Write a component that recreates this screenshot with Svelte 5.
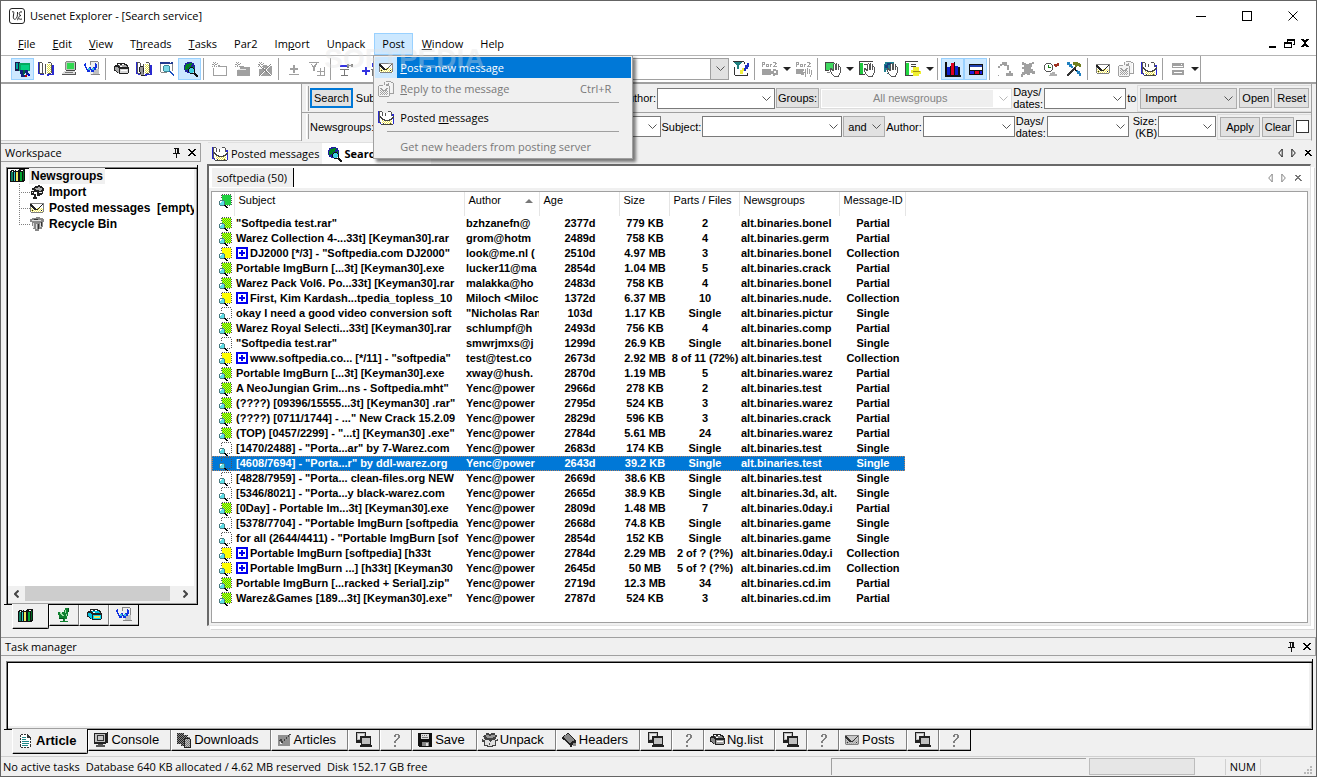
<script>
  const menus = ['&File', '&Edit', '&View', 'T&hreads', '&Tasks', 'Par2', 'Im&port', 'Unpack', 'Post', '&Window', 'Help'];

  const postMenu = [
    { label: '&Post a new message', icon: 'mail', active: true },
    { label: '&Reply to the message', icon: 'reply', key: 'Ctrl+R', disabled: true },
    null,
    { label: 'Posted &messages', icon: 'posted' },
    null,
    { label: 'Get new headers from posting server', disabled: true },
  ];

  // '|' is a separator, 'v' a small drop-down arrow, a leading '*' a pressed button
  const tools = ['*server', 'books', 'pc', 'wdoc', '|', 'box', 'boxbook', 'winfind', '*globe', '|', 'folder', 'folderfull', 'folderdel', '|',
    'plusminus', 'funnelplus', '|', 'treeminus', 'treeplus'];
  const tools2 = ['filterpage', '|', 'par2', 'v', 'par2hand', '|', 'handpc', 'v', 'handdoc', 'handglobe', 'handnote', 'v', '|', '*chart', '*panel', '|',
    'arm', 'bug', 'clock', 'hammer', '|', 'mail', 'reply', 'posted', '|', 'window', 'v'];

  const tree = [
    { icon: 'import', label: 'Import' },
    { icon: 'mail', label: 'Posted messages  [empty]' },
    { icon: 'bin', label: 'Recycle Bin' },
  ];

  const columns = ['', 'Subject', 'Author', 'Age', 'Size', 'Parts / Files', 'Newsgroups', 'Message-ID'];

  const rows = [
    ['"Softpedia test.rar"', 'bzhzanefn@', '2377d', '779 KB', '2', 'alt.binaries.bonel', 'Partial'],
    ['Warez Collection 4-...33t] [Keyman30].rar', 'grom@hotm', '2489d', '758 KB', '4', 'alt.binaries.germ', 'Partial'],
    ['DJ2000 [*/3] - "Softpedia.com DJ2000"', 'look@me.nl (', '2510d', '4.97 MB', '3', 'alt.binaries.bonel', 'Collection'],
    ['Portable ImgBurn [...3t] [Keyman30].exe', 'lucker11@ma', '2854d', '1.04 MB', '5', 'alt.binaries.crack', 'Partial'],
    ['Warez Pack Vol6. Po...33t] [Keyman30].rar', 'malakka@ho', '2483d', '758 KB', '4', 'alt.binaries.bonel', 'Partial'],
    ['First, Kim Kardash...tpedia_topless_10', 'Miloch <Miloc', '1372d', '6.37 MB', '10', 'alt.binaries.nude.', 'Collection'],
    ['okay I need a good video conversion soft', '"Nicholas Ran', '103d', '1.17 KB', 'Single', 'alt.binaries.pictur', 'Single'],
    ['Warez Royal Selecti...33t] [Keyman30].rar', 'schlumpf@h', '2493d', '756 KB', '4', 'alt.binaries.comp', 'Partial'],
    ['"Softpedia test.rar"', 'smwrjmxs@j', '1299d', '26.9 KB', 'Single', 'alt.binaries.bonel', 'Single'],
    ['www.softpedia.co... [*/11] - "softpedia"', 'test@test.co', '2673d', '2.92 MB', '8 of 11 (72%)', 'alt.binaries.test', 'Collection'],
    ['Portable ImgBurn [...3t] [Keyman30].exe', 'xway@hush.', '2870d', '1.19 MB', '5', 'alt.binaries.warez', 'Partial'],
    ['A NeoJungian Grim...ns - Softpedia.mht"', 'Yenc@power', '2966d', '278 KB', '2', 'alt.binaries.test', 'Partial'],
    ['(????) [09396/15555...3t] [Keyman30] .rar"', 'Yenc@power', '2795d', '524 KB', '3', 'alt.binaries.warez', 'Partial'],
    ['(????) [0711/1744] - ..." New Crack 15.2.09', 'Yenc@power', '2829d', '596 KB', '3', 'alt.binaries.crack', 'Partial'],
    ['(TOP) [0457/2299] - "...t] [Keyman30] .exe"', 'Yenc@power', '2784d', '5.61 MB', '24', 'alt.binaries.warez', 'Partial'],
    ['[1470/2488] - "Porta...ar" by 7-Warez.com', 'Yenc@power', '2683d', '174 KB', 'Single', 'alt.binaries.test', 'Single'],
    ['[4608/7694] - "Porta...r" by ddl-warez.org', 'Yenc@power', '2643d', '39.2 KB', 'Single', 'alt.binaries.test', 'Single'],
    ['[4828/7959] - "Porta... clean-files.org NEW', 'Yenc@power', '2669d', '38.6 KB', 'Single', 'alt.binaries.test', 'Single'],
    ['[5346/8021] - "Porta...y black-warez.com', 'Yenc@power', '2665d', '38.9 KB', 'Single', 'alt.binaries.3d, alt.', 'Single'],
    ['[0Day] - Portable Im...3t] [Keyman30].exe', 'Yenc@power', '2809d', '1.48 MB', '7', 'alt.binaries.0day.i', 'Partial'],
    ['[5378/7704] - "Portable ImgBurn [softpedia', 'Yenc@power', '2668d', '74.8 KB', 'Single', 'alt.binaries.game', 'Single'],
    ['for all (2644/4411) - "Portable ImgBurn [sof', 'Yenc@power', '2854d', '152 KB', 'Single', 'alt.binaries.game', 'Single'],
    ['Portable ImgBurn [softpedia] [h33t', 'Yenc@power', '2784d', '2.29 MB', '2 of ? (?%)', 'alt.binaries.0day.i', 'Collection'],
    ['Portable ImgBurn ...] [h33t] [Keyman30', 'Yenc@power', '2645d', '50 MB', '5 of ? (?%)', 'alt.binaries.cd.im', 'Collection'],
    ['Portable ImgBurn [...racked + Serial].zip"', 'Yenc@power', '2719d', '12.3 MB', '34', 'alt.binaries.cd.im', 'Partial'],
    ['Warez&Games [189...3t] [Keyman30].exe"', 'Yenc@power', '2787d', '524 KB', '3', 'alt.binaries.cd.im', 'Partial'],
  ];
  let selected = $state(16);

  const sideTabs = ['ngbooks', 'dish', 'boxblue', 'wdoc'];
  const taskTabs = [
    ['article', 'Article'], ['console', 'Console'], ['downloads', 'Downloads'], ['check', 'Articles'], ['screens'], ['help'],
    ['save', 'Save'], ['unpack', 'Unpack'], ['headers', 'Headers'], ['screens'], ['help'],
    ['boxgray', 'Ng.list'], ['screens'], ['help'], ['mailgray', 'Posts'], ['screens'], ['help'],
  ];

  // every second pixel of a rectangle, for dithered fills
  function dither(x, y, w, h) {
    let d = '';
    for (let j = 0; j < h; j++)
      for (let i = j % 2; i < w; i += 2) d += `M${x + i} ${y + j}h1v1h-1z`;
    return d;
  }

  const lens = [
    ['M2 7h4v1h1v4h-1v1h-4v-1h-1v-4h1z', '#5ae0e8'],
    ['M2 7h4v1h-4zM1 8h1v4h-1zM6 8h1v4h-1zM2 12h4v1h-4z', '#4a7a80'],
    ['M2 8h2v1h-1v1h-1z', '#fff'],
    ['M6 12h2v1h1v1h1v1h-2v-1h-1v-1h-1z', '#000'],
  ];
  const dots = ['M4 1h1v1h-1zM6 1h1v1h-1zM8 1h1v1h-1zM10 1h1v1h-1zM12 1h1v1h-1zM13 3h1v1h-1zM13 5h1v1h-1zM13 7h1v1h-1zM13 9h1v1h-1zM13 11h1v1h-1zM11 12h1v1h-1zM9 12h1v1h-1zM3 2h1v1h-1zM3 4h1v1h-1z', '#555'];
  const hand = [
    ['M5 8h2v1h1V4h1V3h1v1h1V2h1v1h1v1h1v1h1v1h1v6h-1v2h-1v2h-6v-1h-1v-1h-1v-2h-1v-1h-1z', '#fff'],
    ['M5 7h2v1h1v2h-1v-1h-2zM8 3h1v7h-1zM9 2h1v1h-1zM10 3h1v6h-1zM11 2h1v7h-1zM13 3h1v6h-1zM14 5h1v1h-1zM15 6h1v6h-1zM14 12h1v2h-1zM5 9h1v2h-1zM6 11h1v2h-1zM7 13h1v1h-1zM8 14h1v2h-1zM8 15h6v1h-6zM13 14h1v1h-1z', '#555'],
  ];
  const bookBase = [
    ['M2 2h3v1h2v9h-1v-1h-4zM8 3h2v-1h4v10h-3v1h-3z', '#fff'],
    ['M0 1h1v11h1v1h-2zM14 4h2v10h-5v1h-2v-1h-7v-1h4v1h3v-1h5z', '#2a2ad0'],
    ['M1 1h1v11h-1zM2 1h2v1h-2zM4 2h1v10h-1zM7 3h1v10h-1zM13 2h1v10h-1zM10 1h3v1h-3zM10 12h3v1h-3zM2 12h4v1h-4z', '#555'],
    [dither(9, 3, 4, 9), '#e0e040'],
  ];
  const envelope = (paper, speck, line) => [
    ['M1 4h14v9h-14z', paper],
    [dither(2, 8, 12, 4), speck],
    ['M1 3h14v1h-14zM1 4h1v9h-1zM14 4h1v9h-1zM1 12h14v1h-14z', '#808080'],
    ['M2 4h1v1h1v1h1v1h1v1h1v1h2v-1h1v-1h1v-1h1v-1h1v-1h1v1h-1v1h-1v1h-1v1h-1v1h-1v1h-4v-1h-1v-1h-1v-1h-1v-1h-1v-1h-1z', line],
    ['M3 10h1v1h-1zM12 10h1v1h-1z', line],
  ];
  const boxOf = (top, side) => [
    ['M4 2h8v1h2v1h1v2h1v6h-1v1h-9v-1h-2v-1h-1v-1h-2v-5h1v-1h2z', '#222'],
    ['M5 4h7l2 2h-7zM2 6h2l2 2v4l-4-3z', top],
    ['M7 8h8v4h-8z', side],
    ['M8 9h6v1h-6z', '#fff'],
    ['M5 3h2v1h-2zM9 3h2v1h-2zM7 5h2v1h-2z', '#fff'],
  ];
  const star = ['M2 1h1v1h-1zM4 1h1v1h-1zM1 3h5v1h-5zM3 2h1v4h-1zM1 5h1v1h-1zM5 5h1v1h-1zM6 2h1v1h-1z', '#999'];
  const par2 = ['M0 1h3v3h-2v2h-1zM1 2h1v1h-1zM4 3h3v3h-3zM5 4h1v1h-1zM8 3h2v1h-1v2h-1zM11 1h3v1h1v1h-1v1h-1v1h2v1h-4v-1h1v-1h1v-2h-2z', '#a0a0a0'];

  const icons = {
    logo: [['M3 .5h10q2.500 0 2.500 2.500v10q0 2.500 -2.500 2.500h-10q-2.500 0 -2.500 -2.500v-10q0-2.500 2.500-2.500z', '#fff', '#222'],
      ['M3 4c2-1 2 0 1.500 3s0 5 2 4s2-4 2-7M8 12c1 0 1-1 1-2M13 4c-3-1-4 3-1 3.500c-3 0-3.500 5 1 3.500', 'none', '#222']],
    server: [['M0 1h5v3h2v6h-7z', '#1a1a50'], ['M4 2h11v8h-11z', '#00a860'], ['M6 4h8v5h-8z', '#00d080'], ['M1 2h2v6h-2z', '#00a0a0'],
      ['M5 9h3v5h2v2h-4v-3h-1zM10 9h3v3h1v2h-3v-2h-1z', '#102080'], ['M8 9h2v4h-1v1h-1z', '#006040'], ['M10 14h2v2h-2z', '#c00000'], ['M13 13h2v2h-2z', '#0000d0']],
    books: bookBase,
    pc: [['M5 1h9v8h-9z', '#b8c8b8'], ['M6 2h7v6h-7z', '#30d850'], ['M4 1h1v8h-1zM5 0h9v1h-9z', '#888'], ['M14 1h1v9h-1zM5 9h10v1h-10z', '#444'], ['M3 10h11v3h-13v-1h1v-1h1z', '#ddd'], ['M14 11h1v3h-14v-1h13z', '#555'], ['M4 11h8v1h-8z', '#777']],
    wdoc: [['M6 1h8v13h-8z', '#eee'], ['M6 0h8v1h-8zM14 1h1v8h-1zM6 1h1v3h-1zM7 13h9v1h-9z', '#888'], ['M9 8h6v5h-6z', '#c0c0c0'],
      ['M0 3h2v3h1v2h2v-2h2v2h2v-2h2v-3h2v4h-1v2h-2v2h-3v-2h-1v2h-3v-2h-1v-2h-1v-2h-1z', '#1030e0'], ['M4 7h2v2h-2zM8 7h2v2h-2z', '#40c0e0'], ['M1 2h1v1h-1zM11 2h1v1h-1z', '#1030e0']],
    box: boxOf('#a8a8a8', '#d8d8d8'),
    boxblue: [...boxOf('#00c0e0', '#00d8f0'), ['M8 9h6v2h-6z', '#e8e060']],
    boxgray: boxOf('#888', '#a8a8a8'),
    boxbook: [...bookBase, ['M4 6h3v1h1v4h-1v2h1v1h-4v-3h-1v-4h1z', '#999'], ['M4 5h3v1h-3zM3 6h1v5h-1zM7 7h1v4h-1zM4 11h1v4h4v-1h-4z', '#222']],
    winfind: [['M1 1h13v10h-13z', '#fff'], ['M1 1h13v2h-13z', '#223a90'], ['M1 3h1v9h-1zM13 3h1v7h-1zM1 11h7v1h-7z', '#888'], ['M11 1h1v1h-1z', '#fff'], ['M5 5h5v5h-5z', '#7ad8e8'], ['M5 4h5v1h-5zM4 5h1v5h-1zM10 5h1v5h-1zM5 10h5v1h-5z', '#3a8a98'], ['M10 10h2v1h1v1h1v1h1v2h-1v-1h-1v-1h-1v-1h-1v-1h-1z', '#1a50c0']],
    globe: [['M5 1h5v1h2v2h1v5h-1v2h-2v1h-5v-1h-2v-2h-1v-5h1v-2h2z', '#2020a0'], ['M4 3h3v-1h3v2h-1v2h-2v2h-2v1h-2v-4h1zM8 7h3v-2h1v4h-2v1h-2z', '#008020'], ['M8 7h3v1h1v3h-1v1h-3v-1h-1v-3h1z', '#40d0e0'], ['M8 6h3v1h-3zM7 7h1v1h-1zM6 8h1v3h-1zM11 7h1v1h-1zM12 8h1v3h-1zM8 12h3v1h-3zM12 11h1v1h1v1h1v1h1v2h-2v-1h-1v-1h-1v-1h-1v-1h1z', '#111']],
    folder: [star, ['M7 4h2v1h7v10h-14v-8h1v7h12v-8h-8z', '#a0a0a0']],
    folderfull: [star, ['M6 5h4v1h6v9h-13v-6h3z', '#a0a0a0'], ['M4 8h8v1h-8z', '#e8e8e8']],
    folderdel: [star, ['M6 4h4v1h5v10h-13v-7h4z', '#a0a0a0'], ['M3 4l12 11M15 3l-12 12', 'none', '#fff'], ['M2 4l12 11M14 3l-12 12', 'none', '#888']],
    plusminus: [['M7 4h2v3h3v2h-3v3h-2v-3h-3v-2h3zM3 13h10v1h-10z', '#a0a0a0']],
    funnelplus: [['M0 1h10v1h-2v2h-1v2h-1v4h-2v-4h-1v-2h-1v-2h-2z', '#a0a0a0'], ['M2 2h5v1h-1v1h-1v1h-1v-1h-1v-1h-1z', '#fff'], ['M11 7h1v3h3v1h-3v3h-1v-3h-3v-1h3zM8 15h8v-9h-1v8h-7z', '#a0a0a0']],
    treeminus: [['M2 4h7v2h-7z', '#3333e0'], ['M9 3h2v1h2v-1h2v3h-2v-1h-2v2h-2zM2 8h9v1h-4v5h3v1h-7v-1h3v-5h-4z', '#777']],
    treeplus: [['M4 6h2v3h3v2h-3v3h-2v-3h-3v-2h3zM11 2h2v3h2v1h-4z', '#3333e0'], ['M10 8h5v1h-2v6h-2v-6h-1z', '#777']],
    filterpage: [['M1 1h10l3 3v11h-13z', '#fff'], ['M0 0h11v1h-11zM1 6h1v9h-1zM1 15h14v-3h-1v2h-13zM11 1h1v2h-1z', '#333'], ['M1 1h8v1h-1v1h-1v1h-1v4h-2v-4h-1v-1h-1v-1h-1z', '#208080'], ['M7 9h2v-2h2v3h-1v3h-3z', '#f0f040'], ['M12 4h2v-2h2v4h-1v2h-2v2h-2v-3h1z', '#2030c0']],
    par2: [par2, ['M0 8h9v6h-9zM9 10h2v-2h3v1h2v2h-2v-1h-2v2h2v-1h2v3h-3v1h-2v-2h-2z', '#a0a0a0']],
    par2hand: [par2, ['M0 8h8v2h-1v2h1v2h-3v-1h-5zM9 8h1v5h-1zM11 7h1v6h-1zM13 8h1v5h-1zM15 9h1v5h-1zM7 11h2v1h-2zM9 13h1v3h-1zM14 14h1v2h-1z', '#a0a0a0']],
    handpc: [['M0 1h9v9h-9z', '#444'], ['M1 2h8v7h-8z', '#40d860'], ['M2 11h6v1h-6z', '#888'], ...hand],
    handdoc: [['M1 1h13v12h-13z', '#fff'], ['M0 0h14v1h-14zM0 1h1v13h-1zM1 13h7v1h-7zM5 3h7v1h-7z', '#444'], ['M1 2h3v11h-3z', '#20c840'], ...hand],
    handglobe: [['M3 1h9v2h2v8h-2v2h-7v-2h-3v-8h1z', '#208090'], ['M5 2h4v2h-3v3h-3v-3h2z', '#184080'], ...hand],
    handnote: [['M1 1h12v12h-12z', '#fff'], ['M0 0h13v1h-13zM0 1h1v14h-1zM1 14h7v1h-7zM6 3h5v1h-5zM6 5h5v1h-5z', '#444'], ['M1 2h3v12h-3z', '#20d840'], ['M8 6h6v4h2v3h-2v2h-6v-3h-2v-3h2z', '#f0f030'], ['M8 10h7v1h-7z', '#a09010']],
    chart: [['M0 1h2v13h14v2h-16z', '#111'], ['M2 6h4v8h-4z', '#1020d0'], ['M6 2h4v12h-4z', '#e00020'], ['M10 5h3v9h-3z', '#1020d0'], ['M5 5h1v9h-1zM9 1h1v13h-1zM13 6h2v8h-2z', '#111']],
    panel: [['M1 3h14v11h-14z', '#111'], ['M2 6h12v3h-12z', '#fff'], ['M2 4h12v2h-12z', '#2040b0'], ['M2 10h4v3h-4zM12 10h2v3h-2z', '#2020e0'], ['M7 10h4v3h-4z', '#e00020']],
    arm: [['M3 3h2v-2h5v3h2v5h-2v-4h-3v-1h-2v1h-2v2h-2v-2h2zM9 12h3v-2h2v2h2v3h-7zM1 14h1v1h-1z', '#a0a0a0']],
    bug: [['M2 1h2v1h2v1h3v-1h3v-1h2v2h-2v3h-1v2h2v2h2v3h-3v-1h-2v2h-3v-1h-2v1h-2v2h-2v-3h1v-2h2v-3h-2v-2h2v-2h-2z', '#a0a0a0']],
    clock: [['M3 3h5v1h1v5h-1v1h-5v-1h-1v-5h1z', '#fff'], ['M3 2h5v1h-5zM1 4h1v5h-1zM2 3h1v1h-1zM8 3h1v1h-1zM9 4h1v5h-1zM3 10h5v1h-5zM2 9h1v1h-1zM8 9h1v1h-1z', '#555'], ['M5 4h1v2h2v1h-3z', '#108010'], ['M11 3h3v-1h2v3h-2v1h-2v-1h-1z', '#a03020'], ['M7 12h2v-1h3v2h2v2h-8v-1h1z', '#b0b0b0']],
    hammer: [['M1 1h3v2h2v2h1v2h-2v-1h-2v-2h-2zM10 9h2v1h2v2h1v3h-2v-2h-2v-2h-1z', '#2080c0'], ['M7 1h5v1h2v1h1v3h-2v-1h-2v1h-2v-2h-2z', '#708020'], ['M8 6h2v2h-1v1h-1v1h-1v1h-1v1h-1v1h-1v1h-1v1h-2v-2h1v-1h1v-1h1v-1h1v-1h1v-1h1v-1h1z', '#333'], ['M9 8h1v1h1v1h-2z', '#111']],
    mail: envelope('#fff', '#f0e860', '#222'),
    mailgray: envelope('#c8c8c8', '#a8a8a8', '#333'),
    reply: [['M6 1h7v1h1v10h-3v3h-10v-11h5z', '#f4f4f4'], ['M6 1h1v3h-1zM8 0h5v1h-5zM13 1h1v1h-1zM15 2h1v11h-4v-1h3v-10h-1v-1h1zM1 4h4v1h-4zM0 5h1v10h-1zM1 15h10v1h-10zM11 5h1v10h-1zM8 3h2v-1h1v3h-3z', '#a0a0a0'], [dither(2, 9, 8, 5), '#a0a0a0'], ['M2 7h2v1h1v1h2v-1h1v-1h2v1h-1v1h-1v1h-4v-1h-1v-1h-1z', '#a0a0a0']],
    posted: [...bookBase.slice(0, 3), ['M3 6h12v9h-12z', '#fff'], [dither(4, 10, 10, 5), '#e8e050'], ['M2 6h1v1h1v1h1v1h2v1h4v-1h2v-1h1v-1h1v-1h1v2h-1v1h-1v1h-2v1h-6v-1h-2v-1h-1v-1h-1zM3 14h2v-1h1v1h6v-1h1v1h2v1h-12z', '#444']],
    window: [['M2 2h12v5h-12zM2 9h12v5h-12z', '#a0a0a0'], ['M3 5h10v1h-10zM4 11h8v1h-8z', '#fff'], ['M11 3h1v1h-1z', '#fff']],
    ngbooks: [['M1 3h1v-1h3v1h1v-1h4v-1h6v12h-1v1h-14z', '#111'], ['M2 4h2v9h-2z', '#108060'], ['M5 4h1v9h-1z', '#30d0d0'], ['M7 4h2v9h-2z', '#f0e860'], ['M11 4h2v9h-2z', '#00a830'], ['M14 3h1v9h-1z', '#006820'], ['M3 3h1v1h-1zM7 2h2v1h-2zM12 2h2v1h-2z', '#fff']],
    import: [['M5 3h1v-1h3v-1h2v1h2v1h1v1h1v3h-1v3h-1v1h-2v1h-3v-4h-3v2h2v3h1v2h-4v-2h1v-2h-3v-4h1v-3h2z', '#222'], ['M6 4h3v-1h2v1h2v2h-1v1h-2v-1h-3z', '#aaa'], ['M10 8h3v1h-3zM3 6h2v1h-2zM3 8h1v1h-1z', '#eee']],
    bin: [['M1 3h2v-1h4v-1h4v1h3v1h1v3h-1v5h-1v2h-3v2h-4v-2h-2v-3h-1v-4h-2z', '#888'], ['M3 4h9v1h-9zM4 7h1v5h-1zM7 8h1v5h-1zM11 7h1v4h-1z', '#ddd'], ['M9 8h1v5h-1zM5 3h4v1h-4zM12 6h1v4h-1z', '#333']],
    dish: [['M9 1h4v3h-1v5h-1v3h-2v2h3v1h-8v-1h3v-3h-4v-3h-1v-3h2v2h2v-2h2v-2h1z', '#108030'], ['M4 5h1v1h1v1h1v1h1v1h-2v-1h-1v-1h-1zM9 3h1v3h-1zM10 7h1v2h-1z', '#9fe0a8'], ['M12 1h1v4h-1zM3 11h5v1h-5z', '#005018']],
    article: [['M3 1h7v1h1v1h1v1h1v10h-10z', '#fff'], ['M3 1h2v1h-2zM6 1h2v1h-2zM9 1h1v1h1v1h1v1h1v3h-1v-2h-3zM12 8h1v2h-1zM12 11h1v3h-1zM2 2h1v2h-1zM2 5h1v2h-1zM2 8h1v2h-1zM2 11h1v3h-1zM3 14h2v1h-2zM6 14h2v1h-2zM9 14h2v1h-2z', '#333'], ['M4 4h4v1h-4zM4 6h4v1h-4zM4 8h7v1h-7zM4 10h7v1h-7zM4 12h6v1h-6z', '#208888']],
    console: [['M1 1h13v-1h1v11h-2v1h-12z', '#222'], ['M2 2h10v8h-10z', '#c0c0c0'], ['M4 3h7v6h-7z', '#333'], ['M5 4h5v4h-5z', '#c8c8c8'], ['M5 12h5v1h2v2h-9v-2h2z', '#555']],
    downloads: [['M1 1h7v2h3v2h3v2h1v9h-7v-2h-3v-2h-4z', '#888'], [dither(1, 1, 7, 11), '#222'], [dither(5, 3, 7, 11), '#222'], ['M8 6h6v1h1v9h-7z', '#222'], ['M9 7h5v8h-5z', '#c0c0c0'], [dither(9, 7, 5, 8), '#777']],
    check: [['M2 3h12v11h-12z', '#909090'], ['M4 7h2v2h2v-2h2v-2h2v-2h3v-1h-2v3h-2v2h-2v2h-2v2h-2v-2h-2z', '#444'], ['M4 10h1v1h1v1h-2z', '#eee']],
    screens: [['M0 0h10v9h-10z', '#222'], ['M1 1h8v7h-8z', '#b8b8b8'], ['M2 2h6v5h-6z', '#eee'], ['M0 9h5v2h-5zM4 4h11v9h1v2h-12v-2h1z', '#222'], ['M6 6h8v6h-8z', '#c0c0c0']],
    help: [['M6 3h1v-1h4v1h1v3h-1v1h-1v1h-1v1h-1v2h-2v-2h1v-1h1v-1h1v-1h1v-3h-2v2h-2zM6 13h2v2h-2z', '#808080']],
    save: [['M1 1h14v14h-13v-1h-1z', '#111'], ['M4 2h8v5h-8z', '#ddd'], ['M5 3h1v1h-1zM7 3h1v1h-1zM9 3h1v1h-1zM5 5h6v1h-6z', '#777'], ['M5 10h7v4h-7z', '#888'], ['M9 11h2v3h-2z', '#ddd']],
    unpack: [['M2 3h2v-2h3v1h2v-1h4v2h2v2h-1v2h2v2h-2v5h-3v1h-6v-1h-3v-4h-2v-3h2v-2h-1z', '#444'], ['M4 3h3v1h2v-1h4v2h-2v1h-6v-1h-1z', '#999'], ['M3 8h3l2 2 2-2h3v5h-3v1h-4v-1h-3zM1 7h2v1h-2zM13 7h2v1h-2z', '#e0e0e0'], ['M7 11h1v2h-1z', '#555']],
    headers: [['M1 5l6-4 8 7v4l-5 3-9-8z', '#222'], ['M2 5l5-3 7 6-5 3z', '#888'], ['M3 8l6 5v1l-6-5zM11 13l3-2v1l-3 2z', '#ddd'], ['M12 11h3v3h-3z', '#888']],
    art_Single: [['M4 2h9v10h-9z', '#fff'], dots, ...lens],
    art_Collection: [['M4 2h9v10h-9z', '#ff0'], dots, ...lens],
    art_Partial: [['M4 2h9v10h-9z', '#e8f000'], [dither(4, 2, 9, 10), '#20e010'], dots, ...lens],
    art_head: [['M4 2h9v10h-9z', '#20d040'], dots, ...lens],
    art_sel: [dots, ...lens],
    pin: [['M6 3h5v1h-5zM7 4h1v4h-1zM9 4h2v4h-2zM5 8h7v1h-7zM8 9h1v4h-1z', '#111']],
    cross: [['M4 4h2v1h1v1h2v-1h1v-1h2v1h-1v1h-1v1h-1v1h1v1h1v1h1v1h-2v-1h-1v-1h-2v1h-1v1h-2v-1h1v-1h1v-1h1v-1h-1v-1h-1v-1h-1z', 'currentColor']],
    prev: [['M10.500 3.500v9l-4-4.500z', 'none', 'currentColor']],
    next: [['M5.500 3.500v9l4-4.500z', 'none', 'currentColor']],
    mdimin: [['M4 11h7v2h-7z', '#000']],
    mdirestore: [['M6 4h8v6h-2v-1h1v-3h-6v1h-1zM3 7h8v6h-8zM4 9v3h6v-3z', '#000']],
    mdiclose: [['M4 4h3v1h2v-1h3v1h-1v1h-1v1h-1v2h1v1h1v1h1v1h-3v-1h-2v1h-3v-1h1v-1h1v-1h1v-2h-1v-1h-1v-1h-1z', '#000']],
    min: [['M3 8h10v1h-10z', '#000']],
    max: [['M3 3h10v10h-10zM4 4v8h8v-8z', '#000']],
    close: [['M3.500 3.500l9 9M12.500 3.500l-9 9', 'none', '#000']],
  };
</script>

{#snippet icon(name)}
  <svg class="icon" class:smooth={['logo', 'close', 'prev', 'next'].includes(name)} viewBox="0 0 16 16" aria-hidden="true">
    {#each icons[name] as [d, fill, stroke]}
      <path {d} {fill} stroke={stroke ?? 'none'} fill-rule="evenodd" />
    {/each}
  </svg>
{/snippet}

{#snippet accel(text)}
  {@const i = text.indexOf('&')}
  {#if i < 0}{text}{:else}{text.slice(0, i)}<u>{text[i + 1]}</u>{text.slice(i + 2)}{/if}
{/snippet}

{#snippet combo(cls, label, value = '', disabled = false)}
  <span class="combo {cls}">
    <select aria-label={label} {disabled}><option>{value}</option></select>
    <svg viewBox="0 0 9 5" aria-hidden="true"><path d="M.5 .5l4 4 4-4" fill="none" stroke="currentColor" /></svg>
  </span>
{/snippet}

{#snippet toolbar(list)}
  {#each list as t}
    {#if t == '|'}
      <i class="sep"></i>
    {:else if t == 'v'}
      <button class="drop" aria-label="More"><i></i></button>
    {:else}
      <button class="tool" class:on={t[0] == '*'} aria-label={t.replace('*', '')}>{@render icon(t.replace('*', ''))}</button>
    {/if}
  {/each}
{/snippet}

<div class="window">
  <header class="title">
    {@render icon('logo')}
    <h1>Usenet Explorer - [Search service]</h1>
    <button aria-label="Minimize">{@render icon('min')}</button>
    <button aria-label="Maximize">{@render icon('max')}</button>
    <button aria-label="Close">{@render icon('close')}</button>
  </header>

  <nav class="menubar">
    {#each menus as m}
      <div class="menu" class:open={m == 'Post'}>
        <button>{@render accel(m)}</button>
        {#if m == 'Post'}
          <div class="popup">
            {#each postMenu as item}
              {#if item}
                <button class:active={item.active} disabled={item.disabled}>
                  <span class="pic">{#if item.icon}{@render icon(item.icon)}{/if}</span>
                  <span class="text">{@render accel(item.label)}</span>
                  {#if item.key}<span class="key">{item.key}</span>{/if}
                </button>
              {:else}
                <hr />
              {/if}
            {/each}
          </div>
          <span class="mark">SOFTPEDIA</span>
        {/if}
      </div>
    {/each}
    <div class="mdi">
      <button aria-label="Minimize child">{@render icon('mdimin')}</button>
      <button aria-label="Restore child">{@render icon('mdirestore')}</button>
      <button aria-label="Close child">{@render icon('mdiclose')}</button>
    </div>
  </nav>

  <div class="toolbar">
    <div class="tools">
      {@render toolbar(tools)}
      {@render combo('wide boxed', 'Filter')}
      {@render toolbar(tools2)}
    </div>
  </div>

  <div class="search">
    <div class="blank"></div>
    <div class="bars">
      <div class="bar">
        <i class="grip"></i>
        <button class="push default">Search</button>
        <span>Subject:</span>
        {@render combo('grow', 'Subject')}
        <span>Author:</span>
        {@render combo('w118', 'Author')}
        <button class="push tight">Groups:</button>
        {@render combo('w192 all', 'Groups', 'All newsgroups', true)}
        <span class="two">Days/<br />dates:</span>
        {@render combo('w82', 'Days')}
        <span>to</span>
        <div class="set">
          {@render combo('w97 gray', 'Target', 'Import')}
          <button class="push">Open</button>
          <button class="push">Reset</button>
        </div>
      </div>
      <div class="bar">
        <i class="grip"></i>
        <span>Newsgroups:</span>
        {@render combo('grow', 'Newsgroups')}
        <span>Subject:</span>
        {@render combo('w140', 'Subject filter')}
        {@render combo('w42 gray', 'Operator', 'and')}
        <span>Author:</span>
        {@render combo('w92', 'Author filter')}
        <span class="two">Days/<br />dates:</span>
        {@render combo('w82', 'Days filter')}
        <span class="two right">Size:<br />(KB)</span>
        {@render combo('w58', 'Size')}
        <div class="set">
          <button class="push roomy">Apply</button>
          <button class="push">Clear</button>
          <input type="checkbox" aria-label="Use filter" />
        </div>
      </div>
    </div>
  </div>

  <div class="middle">
    <aside>
      <div class="caption">
        <h2>Workspace</h2>
        <button aria-label="Pin">{@render icon('pin')}</button>
        <button aria-label="Close">{@render icon('cross')}</button>
      </div>
      <div class="well">
        <ul class="tree">
          <li class="root">{@render icon('ngbooks')}<span>Newsgroups</span></li>
          {#each tree as node}
            <li>{@render icon(node.icon)}<span>{node.label}</span></li>
          {/each}
        </ul>
        <div class="hscroll">
          <button aria-label="Scroll left"><svg viewBox="0 0 5 8"><path d="M4.500 .5l-3.500 3.500 3.500 3.500" /></svg></button>
          <i></i>
          <button aria-label="Scroll right"><svg viewBox="0 0 5 8"><path d="M.5 .5l3.500 3.500-3.500 3.500" /></svg></button>
        </div>
      </div>
      <div class="tabs">
        {#each sideTabs as t, i}
          <button class:current={i == 0} aria-label={t}>{@render icon(t)}</button>
        {/each}
      </div>
    </aside>

    <main>
      <div class="doctabs">
        <button>{@render icon('posted')}Posted messages</button>
        <button class="current">{@render icon('globe')}Search service</button>
        <span class="arrows">{@render icon('prev')}{@render icon('next')}{@render icon('cross')}</span>
      </div>
      <div class="frame">
        <div class="subtabs">
          <button>softpedia (50)</button>
          <span class="arrows">{@render icon('prev')}{@render icon('next')}{@render icon('cross')}</span>
        </div>
        <div class="list">
          <table>
            <thead>
              <tr>
                {#each columns as c, i}
                  <th class="c{i}">{#if i == 0}{@render icon('art_head')}{:else}{c}{/if}{#if c == 'Author'}<i class="asc"></i>{/if}</th>
                {/each}
              </tr>
            </thead>
            <tbody>
              {#each rows as row, r}
                <tr class:selected={r == selected} onclick={() => (selected = r)}>
                  <td>{@render icon(r == selected ? 'art_sel' : 'art_' + row[6])}</td>
                  {#each row as cell, i}
                    <td class:mid={i > 1 && i != 5}>{#if i == 0 && row[6] == 'Collection'}<svg class="expand" viewBox="0 0 12 12" aria-hidden="true"><path d="M1 1h10v10h-10z" fill="#fff" stroke="#00e" stroke-width="2" /><path d="M3 6h6M6 3v6" stroke="#00e" stroke-width="2" /></svg>{/if}{cell}</td>
                  {/each}
                </tr>
              {/each}
            </tbody>
          </table>
        </div>
      </div>
    </main>
  </div>

  <section class="tasks">
    <div class="caption">
      <h2>Task manager</h2>
      <button aria-label="Pin">{@render icon('pin')}</button>
      <button aria-label="Close">{@render icon('cross')}</button>
    </div>
    <div class="well"></div>
    <div class="tabs">
      {#each taskTabs as [pic, label], i}
        <button class:current={i == 0} class:labelled={label} aria-label={label ?? pic}>{@render icon(pic)}{label ?? ''}</button>
      {/each}
    </div>
  </section>

  <footer>
    <span>No active tasks</span>
    <span>Database 640 KB allocated / 4.62 MB reserved</span>
    <span>Disk 152.17 GB free</span>
    <i class="pane"></i>
    <i class="progress"></i>
    <span class="num">NUM</span>
    <svg class="size" viewBox="0 0 8 8" aria-hidden="true"><path d="M6 0h2v2h-2zM3 3h2v2h-2zM6 3h2v2h-2zM0 6h2v2h-2zM3 6h2v2h-2zM6 6h2v2h-2z" fill="#b8b8b8" /></svg>
  </footer>
</div>

<style>
  :global(body) {
    background: #f0f0f0;
  }

  * {
    box-sizing: border-box;
  }

  .window {
    display: flex;
    flex-direction: column;
    height: 100vh;
    border: 1px solid #646464;
    background: #f0f0f0;
    color: #000;
    font: 11px/16px "Open Sans", "Noto Sans", sans-serif;
    overflow: hidden;
  }

  button {
    margin: 0;
    padding: 0;
    border: 0;
    background: none;
    font: inherit;
    color: inherit;
    white-space: nowrap;
  }

  h1, h2 {
    margin: 0;
    flex: 1;
    font: inherit;
  }

  .icon {
    display: block;
    flex: none;
    width: 16px;
    height: 16px;
    shape-rendering: crispEdges;
  }

  .icon.smooth {
    shape-rendering: auto;
  }

  .title {
    display: flex;
    align-items: center;
    gap: 5px;
    height: 30px;
    padding: 0 3px 0 8px;
    background: #fff;
  }

  .title button {
    display: flex;
    justify-content: center;
    width: 41px;
  }

  .menubar {
    display: flex;
    align-items: flex-end;
    gap: 1px;
    height: 24px;
    padding-left: 9px;
    background: #fff;
  }

  .menu {
    position: relative;
  }

  .menu > button {
    height: 22px;
    padding: 0 7px;
    border: 1px solid transparent;
  }

  .menu.open > button {
    background: #cce8ff;
    border-color: #99d1ff;
  }

  .mark {
    position: absolute;
    z-index: 3;
    left: -50px;
    top: 12px;
    color: rgba(225, 225, 225, 0.35);
    font: bold 28px/28px "Liberation Sans", sans-serif;
    pointer-events: none;
  }

  .popup {
    position: absolute;
    z-index: 2;
    left: -1px;
    top: 22px;
    width: 260px;
    padding: 1px;
    border: 1px solid #a0a0a0;
    background: #f0f0f0;
    box-shadow: 3px 3px 3px rgba(0, 0, 0, 0.5);
  }

  .popup button {
    display: flex;
    align-items: center;
    width: 100%;
    height: 21px;
    text-align: left;
  }

  .popup button:disabled {
    color: #787878;
  }

  .popup .pic {
    display: flex;
    justify-content: center;
    align-items: center;
    width: 22px;
    height: 21px;
  }

  .popup .text {
    flex: 1;
    padding-left: 3px;
    line-height: 21px;
  }

  .popup .key {
    padding-right: 20px;
  }

  .popup .active .pic {
    background: #cce8ff;
  }

  .popup .active .text {
    background: #0078d7;
    color: #fff;
  }

  .popup hr {
    margin: 3px 12px 4px;
    border: 0;
    border-top: 1px solid #a0a0a0;
  }

  .mdi {
    display: flex;
    margin-left: auto;
    padding: 0 3px 4px 0;
  }

  .toolbar {
    height: 29px;
    border-top: 1px solid #b4b4b4;
    border-bottom: 2px solid #a0a0a0;
    background: #fff;
  }

  .tools {
    display: flex;
    align-items: center;
    max-width: 1200px;
    height: 100%;
    padding-left: 10px;
    border-right: 1px solid #a0a0a0;
  }

  .tool {
    display: flex;
    flex: none;
    align-items: center;
    justify-content: center;
    width: 23px;
    height: 22px;
    border: 1px solid transparent;
  }

  .tool.on {
    background: #cce8ff;
    border-color: #99d1ff;
  }

  .sep {
    flex: none;
    width: 1px;
    height: 22px;
    margin: 0 3px 0 2px;
    background: #a0a0a0;
  }

  .drop {
    flex: none;
    width: 11px;
    height: 22px;
  }

  .drop i {
    display: block;
    width: 7px;
    margin: 0 auto;
    border: 4px solid transparent;
    border-width: 4px 4px 0;
    border-top-color: #222;
  }

  .search {
    display: flex;
    font: 11px/12px "Liberation Sans", Arial, sans-serif;
  }

  .blank {
    flex: none;
    width: 300px;
    background: #fff;
    border-bottom: 1px solid #d0d0d0;
  }

  .bars {
    flex: 1;
    border-left: 1px solid #a0a0a0;
  }

  .bar {
    display: flex;
    align-items: center;
    gap: 1px;
    height: 29px;
    margin-right: 4px;
    padding-left: 4px;
    border-right: 1px solid #a0a0a0;
    border-bottom: 1px solid #a0a0a0;
  }

  .bar + .bar {
    height: 28px;
    border-bottom-color: #f0f0f0;
  }

  .grip {
    width: 3px;
    height: 25px;
    border-right: 1px solid #a0a0a0;
    border-left: 1px solid #fff;
  }

  .default + span {
    padding-left: 2px;
  }

  .two.right {
    padding-left: 3px;
    text-align: right;
  }

  .set {
    display: flex;
    align-items: center;
    gap: 2px;
    padding: 2px 2px 2px 2px;
    border: 1px solid #dcdcdc;
    border-right: 0;
  }

  .push {
    height: 20px;
    padding: 0 2px;
    border: 1px solid #adadad;
    background: #e1e1e1;
  }

  .push.default {
    border: 2px solid #0078d7;
  }

  .push.tight {
    padding: 0 1px;
  }

  .push.roomy {
    padding: 0 5px;
  }

  .push + input {
    margin-left: 1px;
  }

  .set input {
    width: 13px;
    height: 13px;
    margin: 0;
    appearance: none;
    border: 1px solid #333;
    background: #fff;
  }

  .combo {
    position: relative;
    flex: none;
    display: flex;
    height: 21px;
  }

  .combo select {
    width: 100%;
    height: 100%;
    padding: 0 16px 0 4px;
    appearance: none;
    border: 1px solid #7a7a7a;
    border-radius: 0;
    background: #fff;
    color: #000;
    font: inherit;
    opacity: 1;
  }

  .combo svg {
    position: absolute;
    right: 4px;
    top: 8px;
    width: 9px;
    height: 5px;
    color: #555;
    pointer-events: none;
  }

  .combo.gray select {
    border-color: #adadad;
    background: #e1e1e1;
  }

  .combo.all select {
    border: 1px solid #ddd;
    box-shadow: inset 0 0 0 1px #fff;
    background: linear-gradient(to left, #fff 18px, #efefef 18px);
    color: #858585;
    text-align: center;
  }

  .combo.all svg {
    color: #b8b8b8;
  }

  .combo.grow,
  .combo.wide {
    flex: 1;
    min-width: 60px;
  }

  .combo.boxed {
    height: 22px;
  }

  .combo.boxed select {
    border-color: #a0a0a0;
    background: linear-gradient(to left, #e1e1e1 17px, #a0a0a0 17px, #a0a0a0 18px, #fff 18px);
  }

  .w42 { width: 42px; }
  .w58 { width: 58px; }
  .w82 { width: 82px; }
  .w92 { width: 92px; }
  .w97 { width: 97px; }
  .w118 { width: 118px; }
  .w140 { width: 140px; }
  .w192 { width: 192px; }

  .middle {
    display: flex;
    flex: 1;
    gap: 6px;
    min-height: 0;
    padding-bottom: 7px;
  }

  aside {
    display: flex;
    flex: none;
    flex-direction: column;
    width: 200px;
    padding-top: 2px;
  }

  .caption {
    display: flex;
    align-items: center;
    height: 19px;
    padding-left: 4px;
    border: 1px solid #a0a0a0;
    border-left: 0;
  }

  .well {
    display: flex;
    flex-direction: column;
    flex: 1;
    margin: 3px 3px 0;
    border: solid #000;
    border-width: 0 1px 1px 0;
    background: #fff;
    box-shadow: inset 2px 2px #f4f4f4, inset 3px 3px #808080, inset 4px 4px #000, inset -1px -1px #a0a0a0, inset -3px -3px #f0f0f0;
    padding: 3px 3px 3px 4px;
    min-height: 0;
  }

  .tree {
    flex: 1;
    margin: 0;
    padding: 0 0 0 1px;
    overflow: hidden;
    list-style: none;
    font: bold 12px/16px "Liberation Sans", sans-serif;
  }

  .tree li {
    position: relative;
    display: flex;
    gap: 4px;
    padding-left: 20px;
  }

  .tree span {
    white-space: pre;
  }

  .tree li::before {
    content: '';
    position: absolute;
    left: 10px;
    top: 0;
    width: 10px;
    height: 8px;
    border: dotted #808080;
    border-width: 0 0 1px 1px;
  }

  .tree li + li + li::before {
    top: -8px;
    height: 16px;
  }

  .tree .root {
    padding-left: 0;
  }

  .tree .root::before {
    content: none;
  }

  .tree .root span {
    background: #f0f0f0;
    padding: 0 2px;
  }

  .hscroll {
    display: flex;
    height: 15px;
    background: #f0f0f0;
  }

  .hscroll button {
    width: 17px;
  }

  .hscroll svg {
    width: 5px;
    height: 8px;
    fill: none;
    stroke: #444;
    stroke-width: 2;
  }

  .hscroll i {
    flex: 1;
    margin-right: 7px;
    background: #cdcdcd;
  }

  .tabs {
    display: flex;
    align-items: flex-start;
    height: 25px;
    padding-left: 11px;
  }

  .tabs button {
    display: flex;
    align-items: center;
    gap: 2px;
    height: 21px;
    padding: 0 7px;
    border-right: 1px solid #808080;
    border-bottom: 1px solid #000;
    border-left: 1px solid #fff;
    box-shadow: inset 0 -1px #b0b0b0;
  }

  .tabs button:last-child {
    border-right-color: #000;
  }

  .tabs .current {
    position: relative;
    height: 25px;
    margin-top: -1px;
    border-right-color: #000;
    border-bottom-right-radius: 2px;
    background: #f0f0f0;
  }

  aside .tabs button {
    width: 30px;
    padding: 0 6px;
  }

  aside .tabs .current {
    width: 37px;
    padding: 0 4px;
  }

  main {
    display: flex;
    flex: 1;
    flex-direction: column;
    min-width: 0;
    padding-top: 1px;
  }

  .doctabs {
    display: flex;
    height: 22px;
    padding-left: 1px;
  }

  .doctabs button {
    display: flex;
    align-items: center;
    gap: 3px;
    padding: 0 2px 0 4px;
    border-top: 1px solid #e0e0e0;
  }

  .doctabs .current {
    padding-right: 8px;
    background: #fff;
    font-weight: bold;
  }

  .arrows {
    display: flex;
    align-items: center;
    margin-left: auto;
    padding-right: 1px;
  }

  .arrows .icon,
  .arrows :global(.icon) {
    width: 14px;
  }

  .frame {
    display: flex;
    flex: 1;
    flex-direction: column;
    min-height: 0;
    margin: 0 5px 4px 0;
    border: solid #696969;
    border-width: 2px 1px 1px 2px;
    border-right-color: #e3e3e3;
    border-bottom-color: #e3e3e3;
    background: #f0f0f0;
    box-shadow: 3px 3px #fff, 4px 4px #d8d8d8;
  }

  .subtabs {
    display: flex;
    height: 22px;
    padding: 2px 4px 0 3px;
    background: #fff;
  }

  .subtabs button {
    margin-bottom: 1px;
    padding: 0 6px 0 5px;
    border-right: 1px solid #000;
    background: #f0f0f0;
  }

  .subtabs .arrows {
    color: #777;
  }

  .list {
    flex: 1;
    min-height: 0;
    margin: 3px 2px 2px;
    border: 1px solid #a0a0a0;
    background: #fff;
    overflow: hidden;
  }

  table {
    width: 693px;
    table-layout: fixed;
    border-collapse: collapse;
    font: bold 11px/15px "Liberation Sans", sans-serif;
  }

  th {
    height: 24px;
    padding: 1px 0 0 4px;
    border-right: 1px solid #e5e5e5;
    font-weight: normal;
    text-align: left;
    vertical-align: top;
    white-space: nowrap;
  }

  td {
    height: 15px;
    padding: 0 0 0 2px;
    overflow: hidden;
    white-space: nowrap;
  }

  td .icon {
    margin: 0 0 -1px 4px;
  }

  th .icon {
    margin-left: 2px;
  }

  td.mid {
    padding: 0 0 0 2px;
    text-align: center;
  }

  .c0 { width: 22px; }
  .c1 { width: 230px; }
  .c2 { width: 75px; }
  .c3 { width: 80px; }
  .c4 { width: 50px; }
  .c5 { width: 70px; }
  .c6 { width: 100px; }
  .c7 { width: 66px; }

  .asc {
    float: right;
    margin: 6px 6px 0 0;
    border: 4px solid transparent;
    border-top: 0;
    border-bottom-color: #777;
  }

  .expand {
    width: 12px;
    height: 12px;
    margin-right: 2px;
    vertical-align: -2px;
    shape-rendering: crispEdges;
  }

  .selected {
    background: #0078d7;
    color: #fff;
    outline: 1px dotted #b08060;
    outline-offset: -1px;
  }

  .tasks .well {
    height: 71px;
  }

  .tasks .tabs {
    height: 26px;
    font: 13px/16px "Liberation Sans", sans-serif;
  }

  .tasks .labelled {
    padding: 0 11px 0 4px;
  }

  .tasks .current {
    padding-left: 5px;
    font-weight: bold;
  }

  footer {
    display: flex;
    align-items: center;
    gap: 6px;
    height: 20px;
    padding: 0 4px 0 2px;
    border-top: 1px solid #d0d0d0;
  }

  .pane {
    width: 255px;
    height: 17px;
    margin-left: auto;
    border: solid #a0a0a0;
    border-width: 1px 0 0 1px;
  }

  .progress {
    width: 106px;
    height: 17px;
    margin-left: -3px;
    border: 1px solid #bcbcbc;
    background: #e6e6e6;
  }

  .num {
    margin: 0 37px 0 24px;
    padding: 0 4px;
    border: solid #d0d0d0;
    border-width: 0 1px;
  }

  .size {
    align-self: flex-end;
    width: 8px;
    height: 8px;
    margin-bottom: 2px;
  }
</style>
